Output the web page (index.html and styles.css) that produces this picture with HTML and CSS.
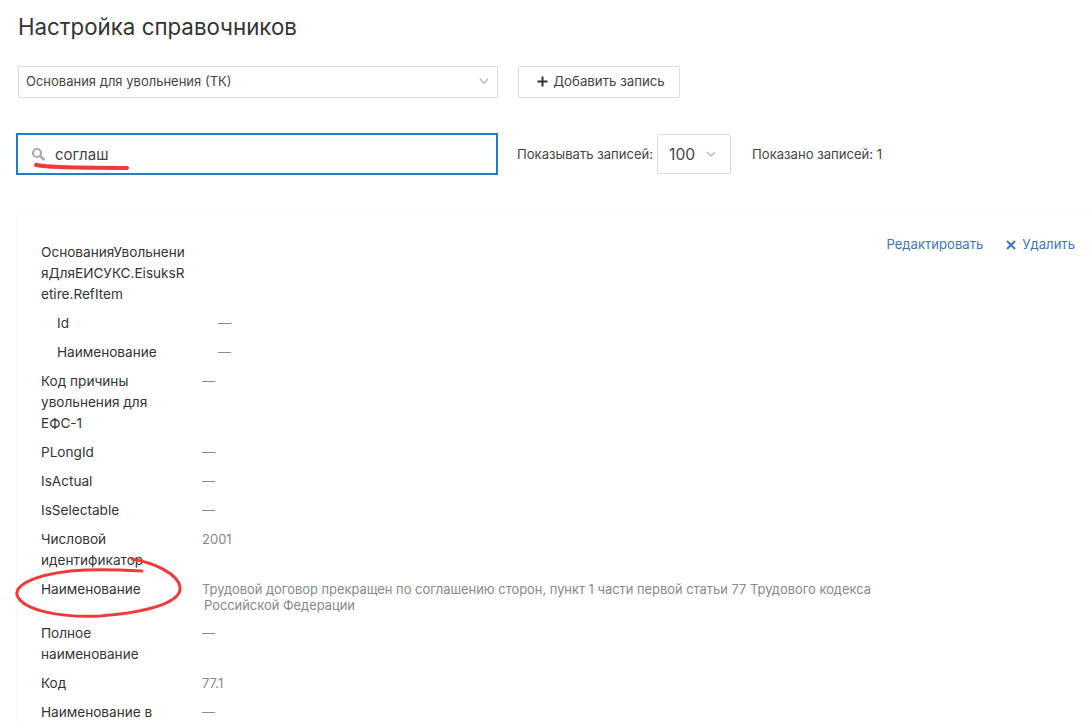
FILE: index.html
```html
<!DOCTYPE html>
<html lang="ru">
<head>
<meta charset="utf-8">
<title>Настройка справочников</title>
<link rel="stylesheet" href="styles.css">
</head>
<body>
<div class="page">
  <h1 class="title">Настройка справочников</h1>
  <div class="toolbar">
    <div class="select select-main"><span>Основания для увольнения (ТК)</span>
      <svg class="chev" width="10" height="6" viewBox="0 0 10 6"><path d="M1 1l4 4 4-4" fill="none" stroke="#bbb" stroke-width="1.5"/></svg>
    </div>
    <button class="btn"><svg width="11" height="11" viewBox="0 0 11 11"><path d="M5.5 0.5v10M0.5 5.5h10" stroke="#333" stroke-width="2"/></svg>Добавить запись</button>
  </div>
  <div class="searchbar">
    <div class="search">
      <svg width="15" height="15" viewBox="0 0 15 15"><circle cx="6" cy="6" r="4" fill="none" stroke="#aaa" stroke-width="2.2"/><path d="M9 9l4.5 4" stroke="#aaa" stroke-width="2.6"/></svg>
      <span>соглаш</span>
    </div>
    <span class="lbl lbl-show">Показывать записей:</span>
    <div class="select select-size"><span>100</span>
      <svg class="chev" width="10" height="6" viewBox="0 0 10 6"><path d="M1 1l4 4 4-4" fill="none" stroke="#bbb" stroke-width="1.5"/></svg>
    </div>
    <span class="lbl lbl-count">Показано записей: 1</span>
  </div>
  <section class="card">
    <div class="actions">
      <a class="link">Редактировать</a>
      <a class="link link-del"><svg width="10" height="10" viewBox="0 0 10 10"><path d="M1 1l8 8M9 1l-8 8" stroke="#3f74c4" stroke-width="2"/></svg>Удалить</a>
    </div>
    <div class="rows">
      <div class="row row-head"><div class="key">ОснованияУвольненияДляЕИСУКС.EisuksRetire.RefItem</div></div>
      <div class="row sub"><div class="key">Id</div><div class="val">—</div></div>
      <div class="row sub"><div class="key">Наименование</div><div class="val">—</div></div>
      <div class="row"><div class="key">Код причины увольнения для ЕФС-1</div><div class="val">—</div></div>
      <div class="row"><div class="key">PLongId</div><div class="val">—</div></div>
      <div class="row"><div class="key">IsActual</div><div class="val">—</div></div>
      <div class="row"><div class="key">IsSelectable</div><div class="val">—</div></div>
      <div class="row"><div class="key">Числовой идентификатор</div><div class="val">2001</div></div>
      <div class="row row-name"><div class="key">Наименование</div><div class="val val-long">Трудовой договор прекращен по соглашению сторон, пункт 1 части первой статьи 77 Трудового кодекса<br><span class="indent">Российской Федерации</span></div></div>
      <div class="row"><div class="key">Полное наименование</div><div class="val">—</div></div>
      <div class="row"><div class="key">Код</div><div class="val">77.1</div></div>
      <div class="row"><div class="key">Наименование в</div><div class="val">—</div></div>
    </div>
  </section>
</div>
<svg class="marks" width="1091" height="727" viewBox="0 0 1091 727">
  <path d="M36 165C60 169 100 167 127 168" fill="none" stroke="#f03a3a" stroke-width="4" stroke-linecap="round"/>
  <path d="M132 559C155 563 178 574 180 587C182 602 150 612 100 616C60 618 22 610 17 595C15 582 45 572 85 570C105 569 125 570 142 571" fill="none" stroke="#f03a3a" stroke-width="3" stroke-linecap="round"/>
</svg>
</body>
</html>
```
FILE: styles.css
```css
html, body { margin: 0; padding: 0; background: #fff; overflow: hidden; height: 727px; }
body { font-family: Inter, "Noto Sans", sans-serif; color: #333; font-size: 14px; position: relative; }
.page { padding: 0 0 0 16px; }
.title { margin: 0; padding: 13px 0 0 2px; font-size: 22.3px; line-height: 28px; font-weight: 400; color: #333; }
.toolbar { display: flex; gap: 20px; margin: 25px 0 0 2px; }
.select { display: flex; align-items: center; justify-content: space-between; box-sizing: border-box; border: 1px solid #ddd; background: #fff; }
.select-main { width: 480px; height: 32px; padding: 0 8px 2px 7px; font-size: 13px; color: #444; }
.btn { display: flex; align-items: center; justify-content: center; gap: 5px; box-sizing: border-box; width: 162px; height: 32px; border: 1px solid #ddd; border-radius: 2px; background: #fff; font: inherit; font-size: 13.25px; color: #444; padding: 0 0 2px 4px; }
.searchbar { display: flex; align-items: center; margin-top: 35px; height: 42px; }
.search { display: flex; align-items: center; gap: 9px; box-sizing: border-box; width: 482px; height: 42px; border: 2px solid #1f7fc8; padding: 0 0 0 13px; font-size: 15px; color: #444; }
.lbl { font-size: 13.1px; color: #444; }
.lbl-show { margin-left: 19px; }
.select-size { width: 74px; height: 40px; margin-left: 4px; padding: 0 14px 0 11px; font-size: 15.6px; border-radius: 2px; color: #444; }
.lbl-count { margin-left: 21px; }
.card { position: relative; margin: 35px 0 0 1px; padding: 31px 0 0 24px; box-shadow: 0 0 2px rgba(0,0,0,.07); min-height: 520px; }
.actions { position: absolute; top: 26px; right: 16px; display: flex; gap: 23px; font-size: 13.1px; line-height: 17px; }
.link { color: #3f74c4; display: flex; align-items: center; gap: 7px; }
.link-del { gap: 6px; }
.rows { display: flex; flex-direction: column; }
.row { display: flex; padding-bottom: 8px; font-size: 13.6px; line-height: 21px; }
.row-head { margin-top: 1px; }
.key { box-sizing: border-box; width: 145px; margin-right: 16px; overflow-wrap: anywhere; color: #333; }
.val { color: #888; font-size: 13px; }
.sub { padding-left: 16px; }
.row-name { height: 36px; }
.val-long { line-height: 16px; padding-top: 3px; width: 700px; font-size: 12.9px; }
.indent { margin-left: 2px; }
.marks { position: absolute; left: 0; top: 0; pointer-events: none; }
```
